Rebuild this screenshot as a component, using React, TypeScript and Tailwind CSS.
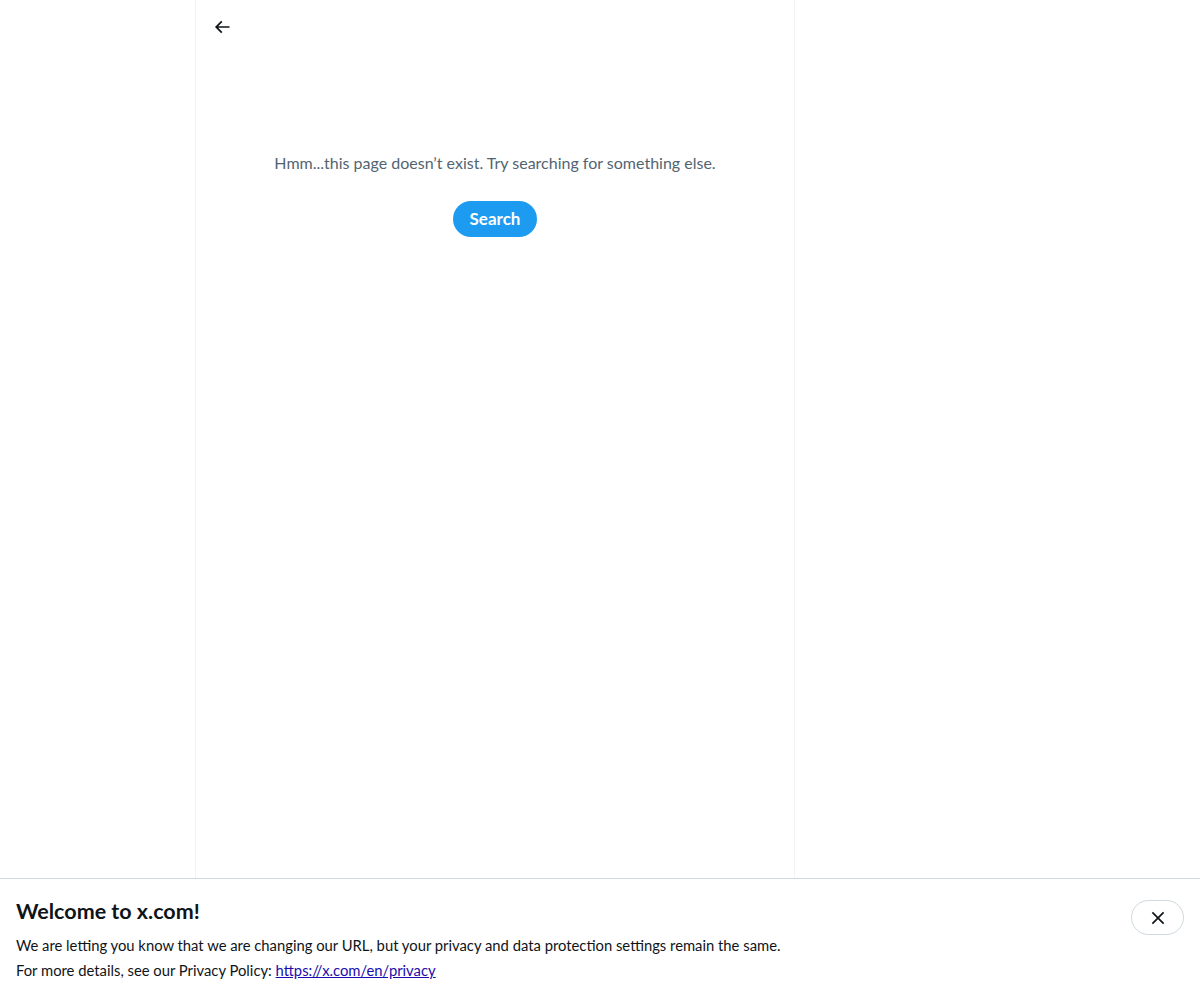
import React from "react";

const BackArrow = () => (
  <svg viewBox="0 0 24 24" className="w-5 h-5 fill-[#0f1419]">
    <path d="M7.414 13l5.043 5.04-1.414 1.42L3.586 12l7.457-7.46 1.414 1.42L7.414 11H21v2H7.414z" />
  </svg>
);

const CloseIcon = () => (
  <svg viewBox="0 0 24 24" className="w-5 h-5 fill-[#0f1419]">
    <path d="M10.59 12L4.54 5.96l1.42-1.42L12 10.59l6.04-6.05 1.42 1.42L13.41 12l6.05 6.04-1.42 1.42L12 13.41l-6.04 6.05-1.42-1.42L10.59 12z" />
  </svg>
);

export default function App() {
  return (
    <div className="h-[1000px] flex flex-col bg-white text-[#0f1419] font-['Lato','Noto_Sans',sans-serif]">
      {/* Main area */}
      <div className="flex flex-1 min-h-0">
        <div className="w-[195px] shrink-0" />
        <main className="w-[600px] shrink-0 border-x border-[#eff3f4] flex flex-col">
          <div className="h-[53px] flex items-center px-4">
            <button className="w-9 h-9 -ml-2 flex items-center justify-center rounded-full">
              <BackArrow />
            </button>
          </div>
          <div className="flex flex-col items-center pt-[100px]">
            <p className="text-[16px] text-[#536471] leading-5">
              Hmm...this page doesn’t exist. Try searching for something else.
            </p>
            <button className="mt-[28px] h-9 px-[17px] rounded-full bg-[#1d9bf0] text-white font-bold text-[17px]">
              Search
            </button>
          </div>
        </main>
        <div className="flex-1" />
      </div>

      {/* URL change banner */}
      <div className="h-[122px] shrink-0 border-t border-[#cfd9de] flex justify-between px-4 pt-[18px]">
        <div>
          <h2 className="text-[21.5px] font-bold leading-7">Welcome to x.com!</h2>
          <p className="mt-[8px] text-[14.8px] leading-[25px]">
            We are letting you know that we are changing our URL, but your privacy and data protection settings remain the same.
          </p>
          <p className="text-[14.8px] leading-[25px]">
            For more details, see our Privacy Policy:{" "}
            <a href="#" className="text-[#1a0dab] underline">
              https://x.com/en/privacy
            </a>
          </p>
        </div>
        <div className="pt-[3px]">
          <button className="w-[53px] h-[35px] rounded-full border border-[#cfd9de] flex items-center justify-center">
            <CloseIcon />
          </button>
        </div>
      </div>
    </div>
  );
}
